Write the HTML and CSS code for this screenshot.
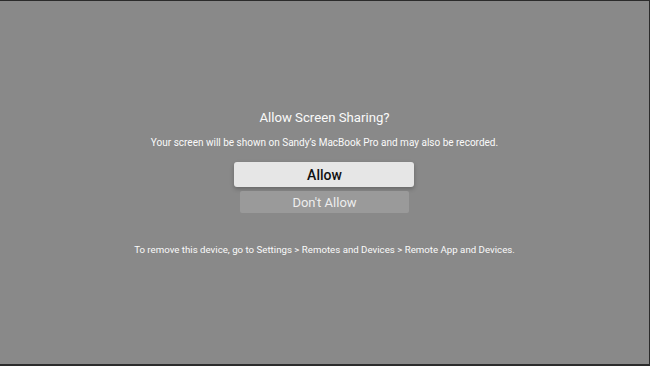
FILE: index.html
```html
<!DOCTYPE html>
<html>
<head>
<meta charset="utf-8">
<link rel="stylesheet" href="styles.css">
</head>
<body>
<div class="screen">
  <div class="dialog">
    <h1 class="title">Allow Screen Sharing?</h1>
    <p class="message">Your screen will be shown on Sandy’s MacBook Pro and may also be recorded.</p>
    <div class="buttons">
      <div class="btn btn-focus">Allow</div>
      <div class="btn btn-plain">Don't Allow</div>
    </div>
    <p class="note">To remove this device, go to Settings &gt; Remotes and Devices &gt; Remote App and Devices.</p>
  </div>
</div>
</body>
</html>
```

FILE: styles.css
```css
* { box-sizing: border-box; }
html, body { margin: 0; padding: 0; }
body {
  width: 650px;
  height: 366px;
  background: #2b2b2b;
  font-family: Roboto, "Noto Sans", sans-serif;
  overflow: hidden;
}
.screen {
  margin-top: 1px;
  width: 649px;
  height: 363px;
  background: #898989;
  display: flex;
  justify-content: center;
}
.dialog {
  display: flex;
  flex-direction: column;
  align-items: center;
  padding-top: 108px;
  color: #fafafa;
}
.title {
  margin: 0;
  font-size: 13.2px;
  font-weight: 400;
  line-height: 18px;
}
.message {
  margin: 9px 0 0;
  font-size: 10px;
  line-height: 14px;
}
.buttons {
  margin-top: 12px;
  display: flex;
  flex-direction: column;
  align-items: center;
  gap: 4px;
}
.btn {
  display: flex;
  align-items: center;
  justify-content: center;
}
.btn-focus {
  width: 180px;
  height: 25px;
  background: #e6e6e6;
  color: #111;
  font-size: 14px;
  font-weight: 500;
  border-radius: 3px;
  box-shadow: 0 2px 4px rgba(0,0,0,0.25);
}
.btn-plain {
  width: 169px;
  height: 22px;
  background: #9a9a9a;
  color: #ededed;
  font-size: 13px;
  border-radius: 2px;
}
.note {
  margin: 30px 0 0;
  font-size: 9.7px;
  line-height: 14px;
}
```
